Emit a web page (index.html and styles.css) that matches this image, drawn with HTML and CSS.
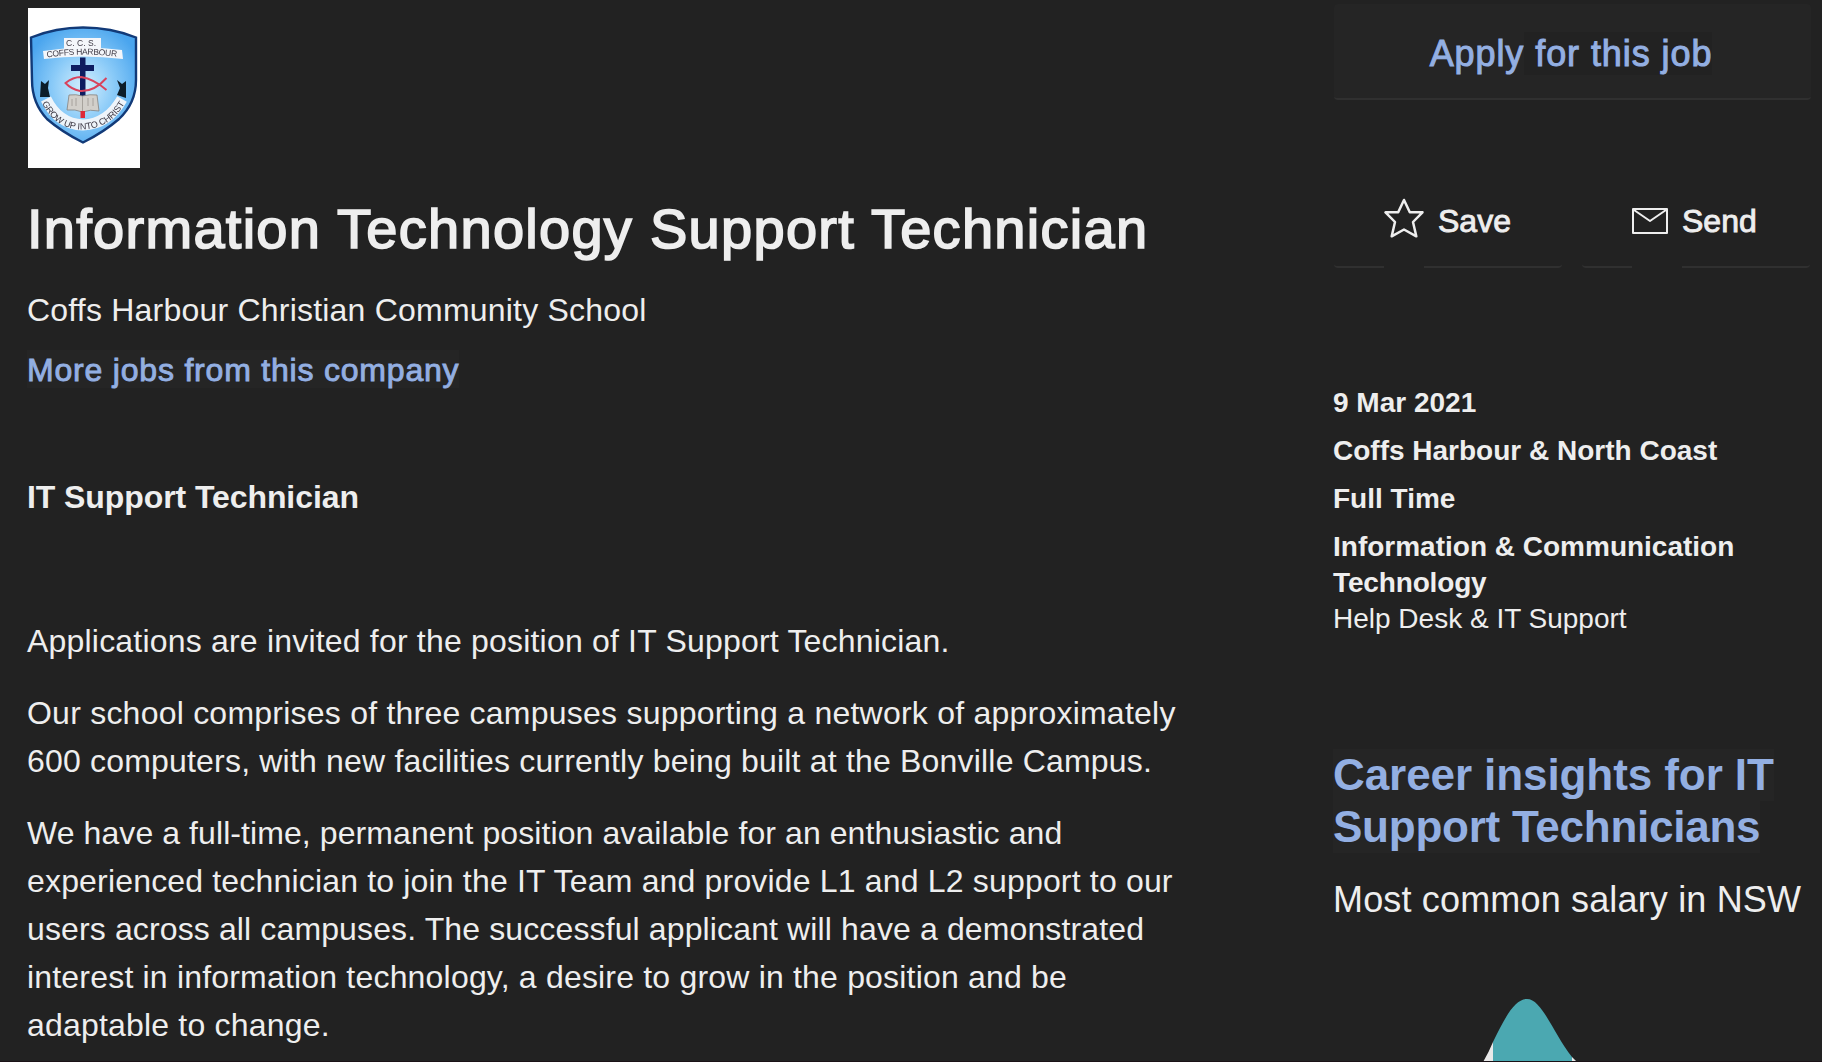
FILE: index.html
```html
<!DOCTYPE html>
<html lang="en">
<head>
<meta charset="utf-8">
<title>Information Technology Support Technician</title>
<link rel="stylesheet" href="styles.css">
</head>
<body>
<div class="page">
  <main class="job">
    <svg class="logo" viewBox="0 0 112 160" width="112" height="160" role="img" aria-label="School crest">
      <defs>
        <radialGradient id="sky" cx="50%" cy="52%" r="58%">
          <stop offset="0" stop-color="#d5effd"/>
          <stop offset=".5" stop-color="#8bcbf8"/>
          <stop offset="1" stop-color="#4aa5ee"/>
        </radialGradient>
        <path id="name-arc" d="M19 49.500Q54 44 91 49"/>
        <path id="motto-arc" d="M14 95Q27 121 54 121.500Q83 121 98 93"/>
      </defs>
      <rect width="112" height="160" fill="#fff"/>
      <g class="crest">
        <path d="M3 29.500Q28 19.500 55 19.500Q83 19.500 108 29.500V72Q108 95 91 111Q76 124 55 134.500Q34 124 19 111Q4 95 4 72Z" fill="url(#sky)" stroke="#123a78" stroke-width="2.400"/>
        <path d="M36 30H73V41H36Z" fill="#f4f6fa"/>
        <path d="M15 43Q54 37 94 42L95 51Q54 46 16 51Z" fill="#f4f6fa"/>
        <path d="M13 73L17 76L21 72L20 80L22 89L12 89Z" fill="#0c1c28"/>
        <path d="M98 73L94 76L89 72L92 80L89 87L98 90Z" fill="#0c1c28"/>
        <path d="M18 91Q30 116 55 117Q80 116 94 91" fill="none" stroke="#eef4fa" stroke-width="11"/>
        <path d="M52 49.500H57.500V88H52ZM43 57H66V63H43Z" fill="#0e1c60"/>
        <path d="M78.500 70Q66 84 52 83Q43 81 37.500 75Q45 69 53 69Q66 71 78.500 82" fill="none" stroke="#d8425c" stroke-width="1.900"/>
        <path d="M41 87Q48 86 54.500 88Q62 86 69 87L71 103Q62 101 54.500 104Q47 101 39 102Z" fill="#d2cfca" stroke="#85807c" stroke-width=".8"/>
        <path d="M54.500 88V103M44 91V98M48 90V98M60 90V98M65 90V98" stroke="#9c9892" stroke-width=".8"/>
        <path d="M52.500 103H57V110H52.500Z" fill="#dd2838"/>
        <text class="crest-text" x="38" y="37.500" font-size="8.500" textLength="30">C. C. S.</text>
        <text class="crest-text" font-size="8.500"><textPath href="#name-arc" textLength="70">COFFS HARBOUR</textPath></text>
        <text class="crest-text" font-size="9"><textPath href="#motto-arc" textLength="103">GROW UP INTO CHRIST</textPath></text>
      </g>
    </svg>
    <h1 class="title">Information Technology Support Technician</h1>
    <p class="company">Coffs Harbour Christian Community School</p>
    <p class="more"><a class="more-link">More jobs from this company</a></p>
    <h2 class="role">IT Support Technician</h2>
    <p class="intro">Applications are invited for the position of IT Support Technician.</p>
    <p class="school"><span class="line">Our school comprises of three campuses supporting a network of approximately</span> <span class="line">600 computers, with new facilities currently being built at the Bonville Campus.</span></p>
    <p class="duties"><span class="line">We have a full-time, permanent position available for an enthusiastic and</span> <span class="line">experienced technician to join the IT Team and provide L1 and L2 support to our</span> <span class="line">users across all campuses. The successful applicant will have a demonstrated</span> <span class="line">interest in information technology, a desire to grow in the position and be</span> <span class="line">adaptable to change.</span></p>
  </main>
  <aside class="side">
    <a class="apply">Apply<span class="apply-rest"> for this job</span></a>
    <div class="actions">
      <a class="action save">
        <svg class="icon" viewBox="0 0 40 40" width="40" height="40"><path d="M20 2L25.800 14.300H38.500L29 24L32.300 38.300L20 31.500L7.700 38.300L11 24L1.500 14.300H14.200Z"/></svg>
        <span>Save</span>
      </a>
      <a class="action send">
        <svg class="icon" viewBox="0 0 36 26" width="36" height="26"><path d="M1 1H35V25H1ZM2 2L18 13L34 2"/></svg>
        <span>Send</span>
      </a>
    </div>
    <ul class="facts">
      <li>9 Mar 2021</li>
      <li>Coffs Harbour &amp; North Coast</li>
      <li>Full Time</li>
      <li><span class="line">Information &amp; Communication</span> <span class="line tight">Technology</span> <span class="line light">Help Desk &amp; IT Support</span></li>
    </ul>
    <h2 class="insights"><a class="line">Career insights for IT</a> <a class="line">Support Technicians</a></h2>
    <p class="salary">Most common salary in NSW</p>
    <svg class="chart" viewBox="0 0 140 63" width="140" height="63">
      <path d="M23 63Q28 55 33 43V63ZM112 58L117 63H112Z" fill="#e9e9e9"/>
      <path d="M33 63V43C45 18 55 0 67 0C82 0 93 34 112 58V63Z" fill="#4ba8b1"/>
    </svg>
  </aside>
</div>
</body>
</html>
```
FILE: styles.css
```css
* { box-sizing: border-box; }

body {
  margin: 0;
  height: 1062px;
  overflow: hidden;
  background: #222;
  color: #eee;
  font-family: "Liberation Sans", Arial, sans-serif;
  font-size: 32px;
  line-height: 48px;
}

h1, h2, p, ul { margin: 0; padding: 0; font-size: inherit; }
ul { list-style: none; }
a { color: #93afe2; }

.page {
  display: grid;
  grid-template-columns: 1306px 478px;
  padding-left: 27px;
  height: 1062px;
  overflow: hidden;
  border-bottom: 1px solid #1b1217;
}

.line { display: table; white-space: nowrap; }

.logo { display: block; margin: 8px 0 0 1px; }
.crest { filter: blur(.7px); }
.crest-text { fill: #3c3844; }

.title {
  margin-top: 27px;
  font-size: 56px;
  font-weight: 400;
  line-height: 68px;
  letter-spacing: 1.28px;
  white-space: nowrap;
  -webkit-text-stroke: 1.7px;
}
.company { margin-top: 23px; letter-spacing: .21px; }
.more { margin-top: 12px; letter-spacing: .8px; }
.more-link { padding-top: 2px; background: #252525; -webkit-text-stroke: .9px; }
.role { margin-top: 79px; letter-spacing: -.085px; }
.intro { margin-top: 96px; letter-spacing: .195px; }
.school, .duties { margin-top: 24px; letter-spacing: .19px; }
.school .line:first-child { letter-spacing: .229px; }
.duties .line:nth-child(1) { letter-spacing: .082px; }
.duties .line:nth-child(2) { letter-spacing: .173px; }
.duties .line:nth-child(3) { letter-spacing: .126px; }

.apply {
  display: flex;
  justify-content: center;
  align-items: flex-start;
  height: 96px;
  margin: 4px 0 0 1px;
  padding: 28px 3px 0 0;
  border-bottom: 2px solid #303030;
  border-radius: 4px;
  background: #252525;
  font-size: 36px;
  line-height: 43px;
  letter-spacing: .92px;
  white-space: pre;
  -webkit-text-stroke: 1px;
}
.apply-rest { background: #222; }

.actions {
  display: grid;
  grid-template-columns: 228px 228px;
  gap: 20px;
  margin: 72px 0 0 1px;
}
.action {
  position: relative;
  display: flex;
  align-items: center;
  gap: 14px;
  height: 96px;
  padding: 4px 0 0 50px;
  border-bottom: 2px solid #303030;
  border-radius: 4px;
  color: #eee;
  -webkit-text-stroke: .9px;
}
/* break in the underline beneath each icon */
.action::after {
  content: "";
  position: absolute;
  left: 50px;
  bottom: -2px;
  width: 40px;
  height: 2px;
  background: #222;
}
.send::after { width: 50px; }
.icon { fill: none; stroke: #eee; stroke-width: 2; stroke-linejoin: round; }
.save .icon { margin-bottom: 6px; stroke-width: 2.5; }

.facts {
  display: grid;
  gap: 12px;
  margin-top: 117px;
  font-size: 28px;
  font-weight: 700;
  line-height: 36px;
}
.tight { letter-spacing: -.15px; }
.light { font-weight: 400; }

.insights {
  margin-top: 112px;
  font-size: 44px;
  line-height: 52px;
  letter-spacing: -.08px;
}
.insights .line { background: #252525; }
.insights .line + .line { letter-spacing: -.24px; }
.salary { margin-top: 23px; font-size: 36px; letter-spacing: .16px; white-space: nowrap; }
.chart { display: block; margin: 75px 0 0 127px; }
```
